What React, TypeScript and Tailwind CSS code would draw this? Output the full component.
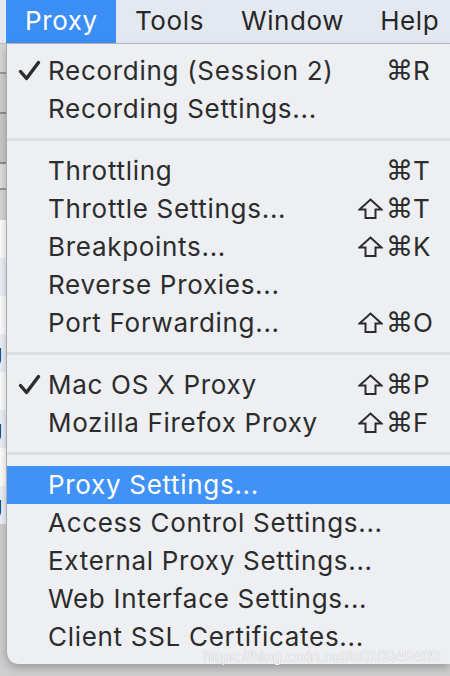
import React from 'react';

type Item =
  | { sep: true }
  | { sep?: false; label: string; check?: boolean; shift?: boolean; key?: string; active?: boolean };

const items: Item[] = [
  { label: 'Recording (Session 2)', check: true, key: 'R' },
  { label: 'Recording Settings...' },
  { sep: true },
  { label: 'Throttling', key: 'T' },
  { label: 'Throttle Settings...', shift: true, key: 'T' },
  { label: 'Breakpoints...', shift: true, key: 'K' },
  { label: 'Reverse Proxies...' },
  { label: 'Port Forwarding...', shift: true, key: 'O' },
  { sep: true },
  { label: 'Mac OS X Proxy', check: true, shift: true, key: 'P' },
  { label: 'Mozilla Firefox Proxy', shift: true, key: 'F' },
  { sep: true },
  { label: 'Proxy Settings...', active: true },
  { label: 'Access Control Settings...' },
  { label: 'External Proxy Settings...' },
  { label: 'Web Interface Settings...' },
  { label: 'Client SSL Certificates...' },
];

// bits of the window behind the menu, peeking out on the left edge
const behind = [
  { h: 28, c: 'bg-[#d6d6d6]' },
  { h: 2, c: 'bg-[#9a9a9a]' },
  { h: 38, c: 'bg-[#cfcfcf]' },
  { h: 2, c: 'bg-[#8e8e8e]' },
  { h: 48, c: 'bg-[#c9c9c9]' },
  { h: 2, c: 'bg-[#8e8e8e]' },
  { h: 24, c: 'bg-[#dedede]' },
  { h: 2, c: 'bg-[#9a9a9a]' },
  { h: 30, c: 'bg-[#d6d6d6]' },
];

const rows = ['r', 'r', 'l.', 'g', 't', 'g', 'r', 'g'];

function Check() {
  return (
    <svg width="23" height="21" viewBox="0 0 23 21" fill="none" stroke="currentColor" strokeWidth="3.4" strokeLinecap="round" strokeLinejoin="round">
      <path d="M2.5 11.5 L8.5 18.5 L20.5 2.5" />
    </svg>
  );
}

function Shift() {
  return (
    <svg width="25" height="21" viewBox="0 0 25 21" fill="none" stroke="currentColor" strokeWidth="2" strokeLinejoin="miter">
      <path d="M12.5 1.5 L23.5 11.5 L17.5 11.5 L17.5 20 L7.5 20 L7.5 11.5 L1.5 11.5 Z" />
    </svg>
  );
}

export default function App() {
  return (
    <div className="relative w-[450px] h-[676px] overflow-hidden bg-[#cfcfcf] font-['Inter','Liberation_Sans',sans-serif]">
      {/* menu bar */}
      <div className="flex h-[44px] items-stretch bg-[#e4e9f1] border-b border-[#b8bcc2] text-[26px] tracking-[0.6px] text-[#272727] pl-[6px]">
        <div className="flex items-center bg-[#3b8ef5] text-white pl-[19px] pb-[2px] w-[110px]">Proxy</div>
        <div className="flex items-center pl-[19px] pb-[2px]">Tools</div>
        <div className="flex items-center pl-[37px] pb-[2px]">Window</div>
        <div className="flex items-center pl-[36px] pb-[2px]">Help</div>
      </div>

      <div className="flex h-[632px]">
        {/* window behind */}
        <div className="w-[6px] flex flex-col shrink-0 overflow-hidden">
          {behind.map((b, i) => (
            <div key={i} className={b.c} style={{ height: b.h }} />
          ))}
          {rows.map((t, i) => (
            <div
              key={'r' + i}
              className={`h-[38px] overflow-hidden text-[22px] leading-[38px] -ml-[10px] font-['Liberation_Sans',sans-serif] ${
                i % 2 ? 'bg-[#eef2f8] text-[#1a1a1a]' : 'bg-white text-[#14306a]'
              }`}
            >
              {t}
            </div>
          ))}
        </div>

        {/* dropdown */}
        <div className="flex-1 h-[620px] bg-[#edeff2] border-l border-[#a9abae] rounded-bl-[12px] shadow-[0_4px_10px_rgba(0,0,0,0.25)] pt-[8px] text-[26px] tracking-[0.7px] text-[#2c2c2c]">
          {items.map((it, i) =>
            it.sep ? (
              <div key={i} className="h-[24px] pt-[10px]">
                <div className="h-[3px] bg-[#dcdde1]" />
              </div>
            ) : (
              <div
                key={i}
                className={`relative flex items-center h-[38px] pb-[2px] ${it.active ? 'bg-[#4192f7] text-white' : ''}`}
              >
                <span className="w-[41px] shrink-0 pl-[11px] flex items-center">
                  {it.check ? <Check /> : null}
                </span>
                <span className="flex-1 whitespace-nowrap">{it.label}</span>
                {it.key && (
                  <span className="flex items-center shrink-0 pr-[15px] tracking-normal">
                    <span className="w-[28px] flex items-center">{it.shift ? <Shift /> : null}</span>
                    <span className="w-[27px] font-['DejaVu_Sans',sans-serif] text-[27px] leading-none">⌘</span>
                    <span className="w-[22px]">{it.key}</span>
                  </span>
                )}
              </div>
            )
          )}
        </div>
      </div>

      <div className="absolute right-[10px] bottom-[11px] text-[16px] leading-none text-[#f6f6f6] font-['Liberation_Sans',sans-serif] [text-shadow:0_0_1px_rgba(0,0,0,0.3)]">
        https://blog.csdn.net/u010945409
      </div>
    </div>
  );
}
